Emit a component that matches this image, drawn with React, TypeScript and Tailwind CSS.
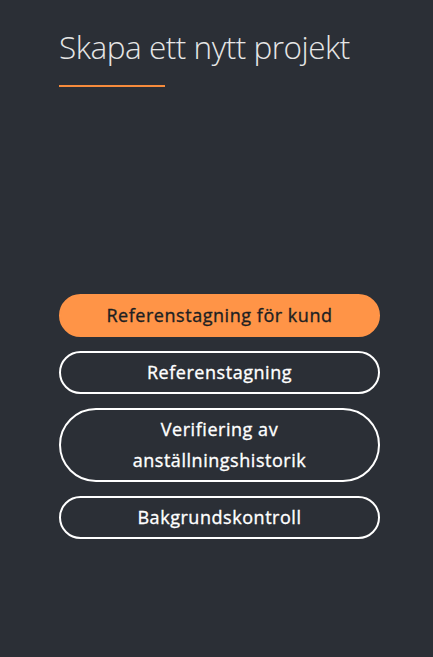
import React from "react";

export default function App() {
  const btn =
    "w-full rounded-full border-2 py-1 text-[18px] leading-[31px] font-normal tracking-[0.03em] text-center [-webkit-text-stroke:0.35px_currentColor]";
  return (
    <div
      className="min-h-[657px] w-full bg-[#2b2f36] pl-[59px] pr-[53px] pt-[27px]"
      style={{ fontFamily: "'Open Sans', 'Liberation Sans', sans-serif" }}
    >
      <h1 className="text-[31.5px] leading-[40px] font-light text-[#e6e6e6] tracking-[-0.015em]">
        Skapa ett nytt projekt
      </h1>
      <div className="mt-[18px] h-[2px] w-[106px] bg-[#f68b3c]" />
      <div className="mt-[207px] flex flex-col gap-[14px]">
        <button className={`${btn} h-[43px] border-[#ff9447] bg-[#ff9447] text-[#1d1f22]`}>
          Referenstagning för kund
        </button>
        <button className={`${btn} h-[43px] border-white text-white`}>Referenstagning</button>
        <button className={`${btn} h-[74px] border-white text-white px-8`}>
          Verifiering av anställningshistorik
        </button>
        <button className={`${btn} h-[43px] border-white text-white`}>Bakgrundskontroll</button>
      </div>
    </div>
  );
}
